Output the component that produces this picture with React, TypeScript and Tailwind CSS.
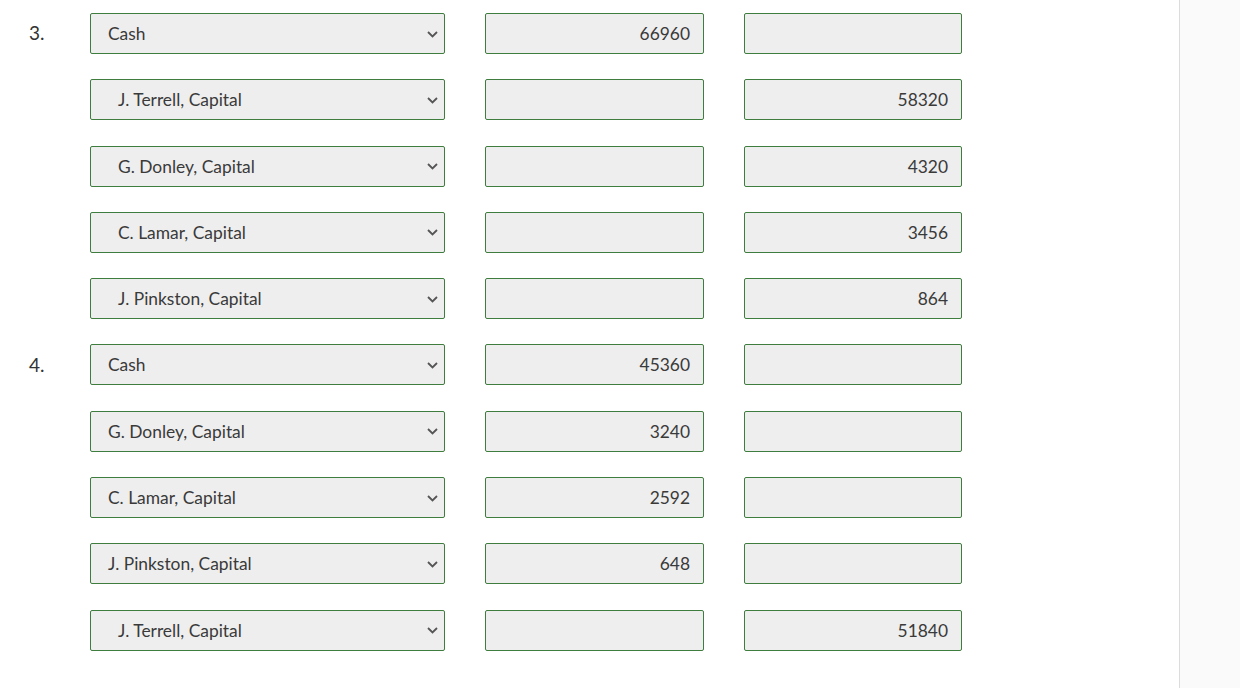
const rows: { num?: string; account: string; indent: boolean; debit: string; credit: string }[] = [
  { num: '3.', account: 'Cash', indent: false, debit: '66960', credit: '' },
  { account: 'J. Terrell, Capital', indent: true, debit: '', credit: '58320' },
  { account: 'G. Donley, Capital', indent: true, debit: '', credit: '4320' },
  { account: 'C. Lamar, Capital', indent: true, debit: '', credit: '3456' },
  { account: 'J. Pinkston, Capital', indent: true, debit: '', credit: '864' },
  { num: '4.', account: 'Cash', indent: false, debit: '45360', credit: '' },
  { account: 'G. Donley, Capital', indent: false, debit: '3240', credit: '' },
  { account: 'C. Lamar, Capital', indent: false, debit: '2592', credit: '' },
  { account: 'J. Pinkston, Capital', indent: false, debit: '648', credit: '' },
  { account: 'J. Terrell, Capital', indent: true, debit: '', credit: '51840' },
];

function Chevron() {
  return (
    <svg width="11" height="7" viewBox="0 0 11 7" fill="none">
      <path d="M1 1l4.5 4.5L10 1" stroke="#555" strokeWidth="1.8" />
    </svg>
  );
}

export default function App() {
  return (
    <div className="flex h-[688px] w-[1240px] overflow-hidden bg-white" style={{ fontFamily: 'Lato, "Open Sans", sans-serif' }}>
      <div className="w-[1180px] shrink-0 border-r border-[#dcdcdc] pt-[13px]">
        <div className="flex flex-col gap-[25.3px]">
          {rows.map((r, i) => (
            <div key={i} className="flex items-center">
              <div className="w-[90px] shrink-0 pl-[29px] text-[19px] text-[#333]">{r.num ?? ''}</div>
              <div className="flex h-[41px] w-[355px] shrink-0 items-center justify-between rounded-[2px] border border-[#3e7d3e] bg-[#eeeeee] pr-[6px] pt-px text-[17.4px] text-[#3a3a3a]">
                <span className={r.indent ? 'pl-[27px]' : 'pl-[17px]'}>{r.account}</span>
                <Chevron />
              </div>
              <div className="ml-[40px] flex h-[41px] w-[219px] shrink-0 items-center justify-end rounded-[2px] border border-[#3e7d3e] bg-[#eeeeee] pr-[13px] pt-px text-[17.4px] text-[#3a3a3a]">
                {r.debit}
              </div>
              <div className="ml-[40px] flex h-[41px] w-[218px] shrink-0 items-center justify-end rounded-[2px] border border-[#3e7d3e] bg-[#eeeeee] pr-[13px] pt-px text-[17.4px] text-[#3a3a3a]">
                {r.credit}
              </div>
            </div>
          ))}
        </div>
      </div>
      <div className="flex-1 bg-[#fafafa]" />
    </div>
  );
}
